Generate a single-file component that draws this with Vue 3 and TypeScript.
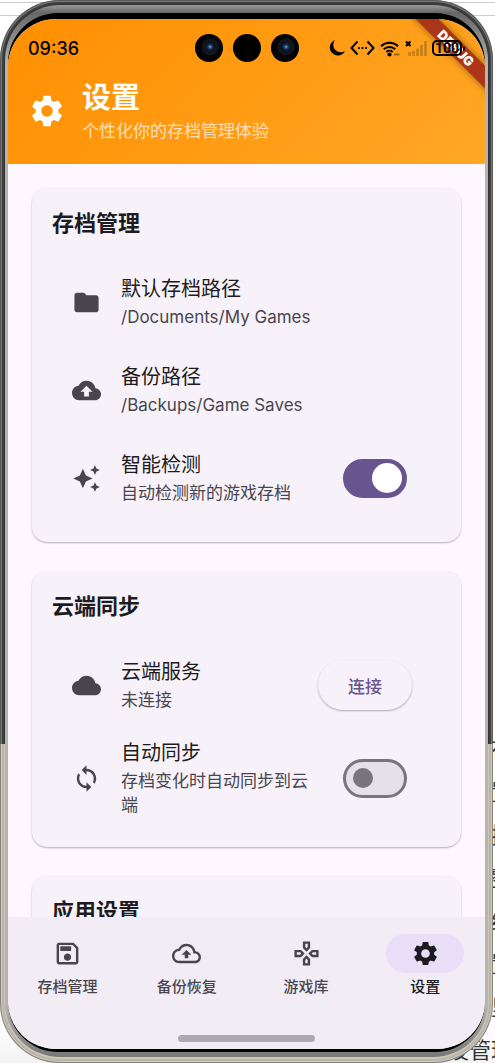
<script setup lang="ts">
import { ref } from 'vue'

interface Row {
  id: string
  icon: string
  title: string
  detail: string
  control?: 'switch' | 'button'
}

interface Section {
  title: string
  rows: Row[]
}

const icons: Record<string, string> = {
  settings:
    'M19.14,12.94c0.04-0.3,0.06-0.61,0.06-0.94c0-0.32-0.02-0.64-0.07-0.94l2.03-1.58c0.18-0.14,0.23-0.41,0.12-0.61l-1.92-3.32c-0.12-0.22-0.37-0.29-0.59-0.22l-2.39,0.96c-0.5-0.38-1.03-0.7-1.62-0.94L14.4,2.81c-0.04-0.24-0.24-0.41-0.48-0.41h-3.84c-0.24,0-0.43,0.17-0.47,0.41L9.25,5.35C8.66,5.59,8.12,5.92,7.63,6.29L5.24,5.33c-0.22-0.08-0.47,0-0.59,0.22L2.74,8.87C2.62,9.08,2.66,9.34,2.86,9.48l2.03,1.58C4.84,11.36,4.8,11.69,4.8,12s0.02,0.64,0.07,0.94l-2.03,1.58c-0.18,0.14-0.23,0.41-0.12,0.61l1.92,3.32c0.12,0.22,0.37,0.29,0.59,0.22l2.39-0.96c0.5,0.38,1.03,0.7,1.62,0.94l0.36,2.54c0.05,0.24,0.24,0.41,0.48,0.41h3.84c0.24,0,0.44-0.17,0.47-0.41l0.36-2.54c0.59-0.24,1.13-0.56,1.62-0.94l2.39,0.96c0.22,0.08,0.47,0,0.59-0.22l1.92-3.32c0.12-0.22,0.07-0.47-0.12-0.61L19.14,12.94zM12,15.6c-1.98,0-3.6-1.62-3.6-3.6s1.62-3.6,3.6-3.6s3.6,1.62,3.6,3.6S13.98,15.6,12,15.6z',
  folder:
    'M10 4H4c-1.1 0-1.99.9-1.99 2L2 18c0 1.1.9 2 2 2h16c1.1 0 2-.9 2-2V8c0-1.1-.9-2-2-2h-8l-2-2z',
  backup:
    'M19.35 10.04C18.67 6.59 15.64 4 12 4 9.11 4 6.6 5.64 5.35 8.04 2.34 8.36 0 10.91 0 14c0 3.31 2.69 6 6 6h13c2.76 0 5-2.24 5-5 0-2.64-2.05-4.78-4.65-4.96zM14 13v4h-4v-4H7l5-5 5 5h-3z',
  sparkle:
    'M19 9l1.25-2.75L23 5l-2.75-1.25L19 1l-1.25 2.75L15 5l2.75 1.25L19 9zm-7.5.5L9 4 6.5 9.5 1 12l5.500 2.500L9 20l2.500-5.500L17 12l-5.500-2.500zM19 15l-1.25 2.75L15 19l2.75 1.25L19 23l1.25-2.75L23 19l-2.75-1.25L19 15z',
  cloud:
    'M19.35 10.04C18.67 6.59 15.64 4 12 4 9.11 4 6.6 5.64 5.35 8.04 2.34 8.36 0 10.91 0 14c0 3.31 2.69 6 6 6h13c2.76 0 5-2.24 5-5 0-2.64-2.05-4.78-4.65-4.96z',
  sync:
    'M12 4V1L8 5l4 4V6c3.31 0 6 2.69 6 6 0 1.01-.25 1.97-.7 2.8l1.46 1.46C19.54 15.03 20 13.57 20 12c0-4.42-3.58-8-8-8zm0 14c-3.31 0-6-2.69-6-6 0-1.01.25-1.97.7-2.8L5.24 7.74C4.46 8.97 4 10.43 4 12c0 4.42 3.58 8 8 8v3l4-4-4-4v3z',
  save:
    'M17 3H5c-1.11 0-2 .9-2 2v14c0 1.1.89 2 2 2h14c1.1 0 2-.9 2-2V7l-4-4zm2 16H5V5h11.17L19 7.83V19zm-7-7c-1.66 0-3 1.34-3 3s1.34 3 3 3 3-1.34 3-3-1.34-3-3-3zM6 6h9v4H6V6z',
  backupOutline:
    'M19.35 10.04C18.67 6.59 15.64 4 12 4 9.11 4 6.6 5.64 5.35 8.04 2.34 8.36 0 10.91 0 14c0 3.31 2.69 6 6 6h13c2.76 0 5-2.24 5-5 0-2.64-2.05-4.78-4.65-4.96zM19 18H6c-2.21 0-4-1.79-4-4 0-2.05 1.53-3.76 3.56-3.97l1.07-.11.5-.95C8.08 7.14 9.94 6 12 6c2.62 0 4.88 1.86 5.39 4.43l.3 1.5 1.53.11c1.56.1 2.78 1.41 2.78 2.96 0 1.65-1.35 3-3 3zM8 13h2.55v3h2.9v-3H16l-4-4z',
  games:
    'M13 4v2.67l-1 1-1-1V4h2m7 7v2h-2.67l-1-1 1-1H20M6.67 11l1 1-1 1H4v-2h2.67M12 16.33l1 1V20h-2v-2.67l1-1M15 2H9v5.5l3 3 3-3V2zm7 7h-5.5l-3 3 3 3H22V9zM7.5 9H2v6h5.5l3-3-3-3zm4.5 4.5l-3 3V22h6v-5.5l-3-3z',
}

const sections: Section[] = [
  {
    title: '存档管理',
    rows: [
      { id: 'save-path', icon: 'folder', title: '默认存档路径', detail: '/Documents/My Games' },
      { id: 'backup-path', icon: 'backup', title: '备份路径', detail: '/Backups/Game Saves' },
      { id: 'detect', icon: 'sparkle', title: '智能检测', detail: '自动检测新的游戏存档', control: 'switch' },
    ],
  },
  {
    title: '云端同步',
    rows: [
      { id: 'cloud', icon: 'cloud', title: '云端服务', detail: '未连接', control: 'button' },
      { id: 'auto-sync', icon: 'sync', title: '自动同步', detail: '存档变化时自动同步到云端', control: 'switch' },
    ],
  },
  { title: '应用设置', rows: [] },
]

const tabs = [
  { icon: 'save', label: '存档管理' },
  { icon: 'backupOutline', label: '备份恢复' },
  { icon: 'games', label: '游戏库' },
  { icon: 'settings', label: '设置' },
]

const switches = ref<Record<string, boolean>>({ detect: true, 'auto-sync': false })
const activeTab = ref('设置')
const backdropLines = ['存', '置', '控', '整', '经', '置', '里']
</script>

<template>
  <div class="desk">
    <div class="backdrop" aria-hidden="true">
      <div class="rule first"></div>
      <div class="rule"></div>
      <div class="lines">
        <span v-for="(line, i) in backdropLines" :key="i" class="line">{{ line }}</span>
        <span class="line last">设管理</span>
      </div>
    </div>

    <div class="shell">
      <div class="rim">
        <div class="bezel">
          <div class="screen">
            <header class="header">
              <div class="ribbon" aria-hidden="true">DEBUG</div>
              <div class="status">
                <span class="clock">09:36</span>
                <div class="cameras">
                  <span class="camera lens"></span>
                  <span class="camera"></span>
                  <span class="camera lens"></span>
                </div>
                <div class="indicators">
                  <svg width="16" height="18" viewBox="0 0 16 18">
                    <path d="M6 1A8 8 0 1 0 16 12A7.500 7.500 0 0 1 6 1z" />
                  </svg>
                  <svg width="25" height="16" viewBox="0 0 25 16" fill="none" stroke="#000" stroke-width="2">
                    <path d="M7.500 1.500L1.500 8l6 6.500M17.500 1.500l6 6.500-6 6.500" />
                    <path d="M8 8h1.800M11.600 8h1.800M15.200 8h1.800" />
                  </svg>
                  <svg width="20" height="17" viewBox="0 0 20 17" fill="none" stroke="#000" stroke-width="2">
                    <path d="M1 6.200a12.500 12.500 0 0 1 17 0M3.700 9.200a8.600 8.600 0 0 1 11.600 0M6.300 12a4.800 4.800 0 0 1 6.400 0" />
                    <circle cx="9.500" cy="14.500" r="2.100" fill="#000" stroke="none" />
                    <path d="M14 14.500h5.500" stroke="#9a681b" />
                  </svg>
                  <svg width="22" height="16" viewBox="0 0 22 16" fill="none">
                    <path d="M1 1.500l4.500 4.500M5.500 1.500L1 6" stroke="#000" stroke-width="2" />
                    <path d="M4.500 16v-4M8.500 16v-5M12.500 16V8.500M16.500 16V5M20.500 16V1" stroke="#c27d1c" stroke-width="2.500" />
                  </svg>
                  <span class="battery-box">
                    <span class="battery">100</span>
                    <span class="battery-tip"></span>
                  </span>
                </div>
              </div>
              <div class="heading">
                <svg class="heading-icon" viewBox="0 0 24 24"><path :d="icons.settings" /></svg>
                <div class="heading-text">
                  <h1>设置</h1>
                  <p>个性化你的存档管理体验</p>
                </div>
              </div>
            </header>

            <main class="content">
              <section v-for="section in sections" :key="section.title" class="card">
                <h2>{{ section.title }}</h2>
                <div v-for="row in section.rows" :key="row.id" class="row">
                  <svg class="row-icon" viewBox="0 0 24 24"><path fill-rule="evenodd" :d="icons[row.icon]" /></svg>
                  <component
                    :is="row.control === 'switch' ? 'label' : 'div'"
                    class="row-text"
                    :for="row.control === 'switch' ? row.id : undefined"
                  >
                    <span class="row-title">{{ row.title }}</span>
                    <span class="row-detail">{{ row.detail }}</span>
                  </component>
                  <input
                    v-if="row.control === 'switch'"
                    :id="row.id"
                    v-model="switches[row.id]"
                    class="switch"
                    type="checkbox"
                    role="switch"
                  />
                  <button v-if="row.control === 'button'" class="connect" type="button">连接</button>
                </div>
              </section>
            </main>

            <nav class="nav">
              <div class="tabs">
                <button
                  v-for="tab in tabs"
                  :key="tab.label"
                  type="button"
                  class="tab"
                  :class="{ active: tab.label === activeTab }"
                  @click="activeTab = tab.label"
                >
                  <span class="pill">
                    <svg class="tab-icon" viewBox="0 0 24 24"><path fill-rule="evenodd" :d="icons[tab.icon]" /></svg>
                  </span>
                  <span>{{ tab.label }}</span>
                </button>
              </div>
              <div class="home-bar"></div>
            </nav>
          </div>
        </div>
      </div>
    </div>
  </div>
</template>

<style>
body {
  margin: 0;
  background: #fff;
}
</style>

<style scoped>
* {
  box-sizing: border-box;
}

.desk {
  display: grid;
  height: 100vh;
  overflow: hidden;
  font-family: Inter, "Noto Sans CJK SC", sans-serif;
  color: #1d1b20;
}

.backdrop,
.shell {
  grid-area: 1 / 1;
  min-width: 0;
  min-height: 0;
}

.backdrop {
  display: flex;
  flex-direction: column;
  overflow: hidden;
  background: linear-gradient(to bottom, #fff 96%, #f3f3f3);
}

.rule {
  flex: none;
  height: 13px;
  border-bottom: 1px solid #ccc;
}

.rule.first {
  height: 3px;
}

.lines {
  display: flex;
  flex-direction: column;
  align-items: flex-end;
  margin-top: auto;
  font-size: 22px;
  line-height: 43px;
  color: #333;
}

.line {
  margin-right: -18px;
}

.line.last {
  line-height: 26px;
  margin-top: 8px;
}

.shell {
  display: flex;
  margin-right: 2px;
  padding: 5px 5px 6px;
  border-radius: 60px;
  background: linear-gradient(to bottom, #333 70%, #cdc6b6 70%);
  box-shadow:
    inset 0 0 0 1px rgba(60, 60, 60, 0.5),
    inset 0 0 0 2px rgba(255, 255, 255, 0.3),
    inset 0 0 0 4px rgba(110, 110, 110, 0.2);
}

.rim {
  flex: 1;
  display: flex;
  min-width: 0;
  padding: 8px 3px 5px;
  border-radius: 55px;
  background: linear-gradient(to bottom, #999 0, #666 8px, #b4b4b0 60px, #b4b4b0 95%, #777 100%);
}

.bezel {
  flex: 1;
  display: flex;
  min-width: 0;
  padding: 6px 0 3px;
  border-radius: 50px;
  background: #000;
}

.screen {
  flex: 1;
  display: flex;
  flex-direction: column;
  min-width: 0;
  overflow: hidden;
  border-radius: 48px;
  background: #fef7ff;
}

.header {
  position: relative;
  flex: none;
  padding: 0 20px 20px;
  background: linear-gradient(135deg, #ff8f00, #ffa726);
  color: #fff;
}

.ribbon {
  position: absolute;
  top: 21px;
  right: -31px;
  width: 120px;
  background: #ac3519;
  box-shadow: 0 0 7px rgba(0, 0, 0, 0.45);
  font-size: 13px;
  font-weight: 900;
  line-height: 16px;
  text-align: center;
  transform: rotate(45deg);
}

.status {
  position: relative;
  display: grid;
  grid-template-columns: 1fr auto 1fr;
  align-items: center;
  height: 58px;
  color: #000;
}

.clock {
  font-size: 18px;
  font-weight: 500;
}

.cameras {
  display: flex;
  gap: 10px;
}

.camera {
  width: 28px;
  height: 28px;
  border-radius: 50%;
  background: #000;
}

.camera.lens {
  background: radial-gradient(circle at 54% 46%, #7fa8d8 0, #1c3a66 2px, #0c1422 4px, #11151c 8px, #000 9px);
}

.indicators {
  display: flex;
  align-items: center;
  justify-content: flex-end;
  gap: 5px;
}

.indicators svg {
  flex: none;
}

.battery-box {
  flex: none;
  display: flex;
  align-items: center;
  gap: 1px;
}

.battery {
  width: 30px;
  border: 2px solid #000;
  border-radius: 5px;
  font-family: Roboto, sans-serif;
  font-size: 14px;
  font-weight: 700;
  line-height: 12px;
  text-align: center;
}

.battery-tip {
  width: 2px;
  height: 5px;
  border-radius: 0 2px 2px 0;
  background: #000;
}

.heading {
  display: flex;
  align-items: center;
  gap: 16px;
}

.heading-icon {
  width: 38px;
  height: 38px;
  fill: #fff;
}

.heading-text {
  padding-top: 1px;
}

h1,
h2,
p {
  margin: 0;
}

h1 {
  font-size: 29px;
  font-weight: 700;
  line-height: 40px;
}

p {
  font-size: 17px;
  line-height: 26px;
  color: rgba(255, 255, 255, 0.7);
}

.heading + * {
  margin: 0;
}

.content {
  flex: 1;
  display: flex;
  flex-direction: column;
  gap: 29px;
  min-height: 0;
  padding: 24px 24px 0;
  overflow: hidden;
}

.card {
  flex: none;
  padding: 20px;
  border-radius: 15px;
  background: #f7f2fa;
  box-shadow: 0 1px 2px rgba(0, 0, 0, 0.3);
}

h2 {
  margin-bottom: 20px;
  font-size: 22px;
  font-weight: 700;
  line-height: 30px;
}

.row {
  display: flex;
  align-items: center;
  gap: 20px;
  min-height: 88px;
  padding: 10px 29px 10px 20px;
}

.row-icon {
  flex: none;
  width: 29px;
  height: 29px;
  fill: #49454f;
}

.row-text {
  flex: 1;
  display: flex;
  flex-direction: column;
  gap: 2px;
  min-width: 0;
}

.row-title {
  font-size: 20px;
  line-height: 28px;
}

.row-detail {
  font-size: 17px;
  line-height: 24px;
  color: #49454f;
}

.switch {
  appearance: none;
  flex: none;
  display: flex;
  align-items: center;
  width: 64px;
  height: 39px;
  margin: 0 5px 0 0;
  padding: 0 7px;
  border: 3px solid #79747e;
  border-radius: 20px;
  background: #e6e0e9;
}

.switch::before {
  content: "";
  width: 20px;
  height: 20px;
  border-radius: 50%;
  background: #79747e;
}

.switch:checked {
  justify-content: flex-end;
  padding: 0 2px;
  border-color: #68548e;
  background: #68548e;
}

.switch:checked::before {
  width: 30px;
  height: 30px;
  background: #fff;
}

.connect {
  flex: none;
  width: 94px;
  height: 50px;
  border: 0;
  border-radius: 25px;
  background: #f7f2fa;
  box-shadow: 0 1px 2px rgba(0, 0, 0, 0.3);
  font: inherit;
  font-size: 17px;
  font-weight: 500;
  color: #68548e;
}

.nav {
  flex: none;
  display: flex;
  flex-direction: column;
  align-items: center;
  justify-content: space-between;
  height: 132px;
  padding: 17px 0 7px;
  background: #f2edf5;
}

.tabs {
  display: flex;
  width: 100%;
}

.tab {
  flex: 1;
  display: flex;
  flex-direction: column;
  align-items: center;
  gap: 4px;
  padding: 0;
  border: 0;
  background: none;
  font: inherit;
  font-size: 15px;
  font-weight: 500;
  line-height: 20px;
  color: #49454f;
}

.pill {
  display: grid;
  place-items: center;
  width: 78px;
  height: 39px;
  border-radius: 20px;
}

.tab-icon {
  width: 29px;
  height: 29px;
  fill: currentColor;
}

.tab.active {
  color: #1d1b20;
}

.active .pill {
  background: #e8def8;
}

.home-bar {
  width: 137px;
  height: 7px;
  border-radius: 4px;
  background: #aea9b1;
}
</style>
